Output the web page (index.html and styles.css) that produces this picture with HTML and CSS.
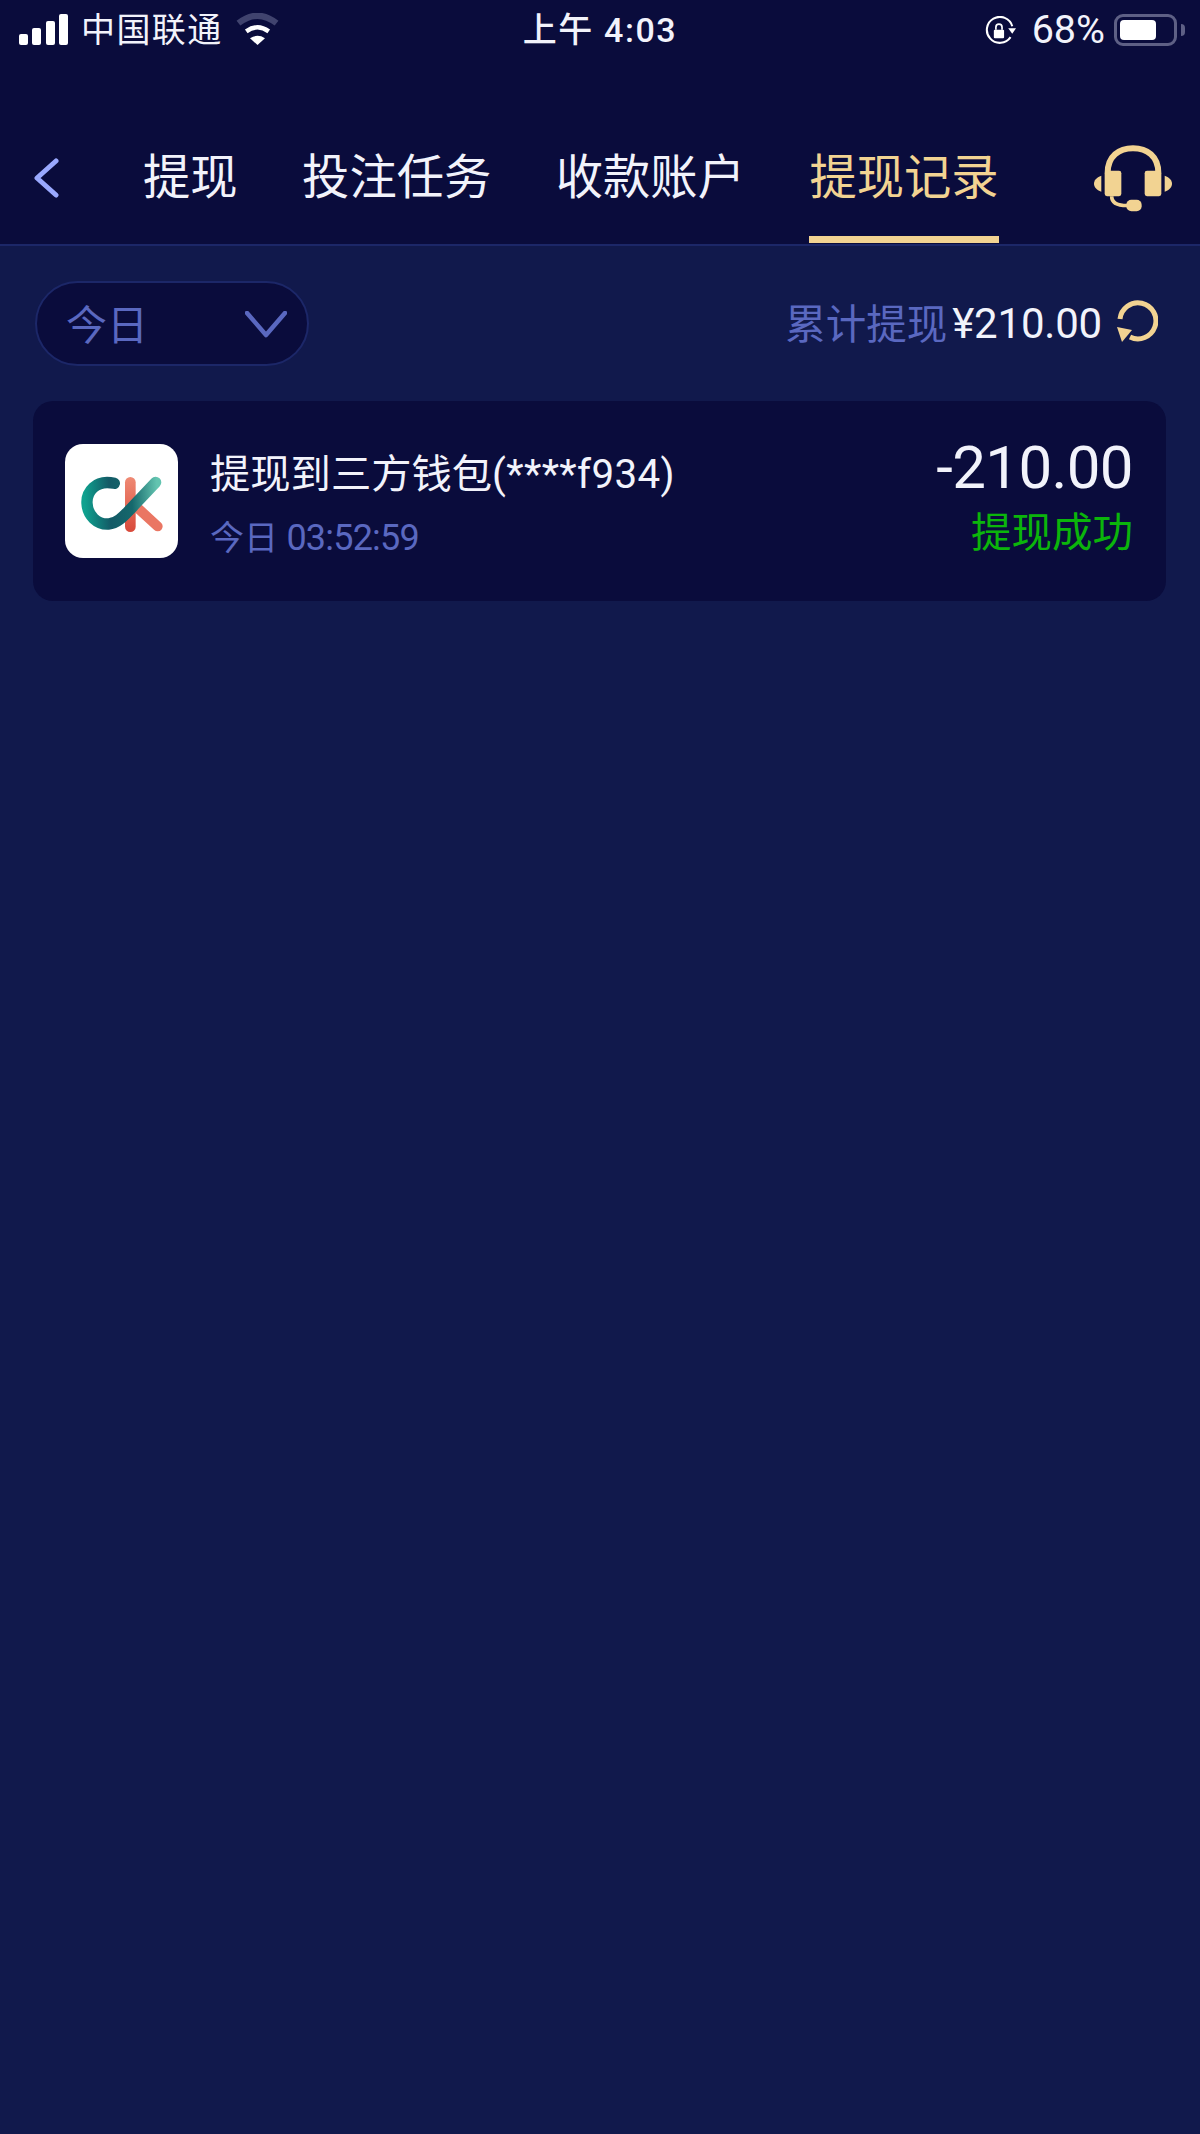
FILE: index.html
```html
<!DOCTYPE html>
<html lang="zh-CN">
<head>
<meta charset="utf-8">
<title>提现记录</title>
<link rel="stylesheet" href="styles.css">
</head>
<body>
<header class="top">
  <div class="status">
    <div class="status-left">
      <svg class="signal" viewBox="0 0 49 31"><rect x="0" y="20" width="9" height="11" rx="2"/><rect x="13" y="14" width="9" height="17" rx="2"/><rect x="27" y="7" width="9" height="24" rx="2"/><rect x="40" y="0" width="9" height="31" rx="2"/></svg>
      <span class="carrier">中国联通</span>
      <svg class="wifi" viewBox="705 38 130 94"><path class="wifi-far" d="M714 68Q770 24 826 68"/><path class="wifi-near" d="M737 92Q770 68 803 92"/><path class="wifi-dot" d="M748 112Q770 98 792 112L770 132Z"/></svg>
    </div>
    <div class="clock">上午 4:03</div>
    <div class="status-right">
      <svg class="lock" viewBox="75 48 95 85"><path class="lock-ring" d="M157 78A38 38 0 1 0 152 110"/><path class="lock-fill" d="M145 84L168 84L157 100Z"/><rect class="lock-fill" x="103" y="88" width="30" height="25" rx="3"/><path class="lock-shackle" d="M109 88V81A9 9 0 0 1 127 81V88"/></svg>
      <span class="percent">68%</span>
      <span class="battery"><span class="battery-level"></span></span>
      <span class="battery-nub"></span>
    </div>
  </div>
  <nav class="nav">
    <svg class="back" viewBox="0 0 25 40"><path d="M22 3L3 20L22 37"/></svg>
    <div class="tabs">
      <a class="tab">提现</a>
      <a class="tab">投注任务</a>
      <a class="tab">收款账户</a>
      <a class="tab tab-active">提现记录</a>
    </div>
    <svg class="headset" viewBox="43 45 234 200">
      <path class="hs-band" d="M84 128C84 78 118 54 160 54C202 54 236 78 236 128"/>
      <rect class="hs-fill" x="75" y="122" width="50" height="76" rx="7"/>
      <rect class="hs-fill" x="195" y="122" width="50" height="76" rx="7"/>
      <path class="hs-fill" d="M65 137V185C50 180 43 170 43 161C43 152 50 142 65 137Z"/>
      <path class="hs-fill" d="M255 137V185C270 180 277 170 277 161C277 152 270 142 255 137Z"/>
      <path class="hs-mic" d="M96 198C96 218 112 226 142 226"/>
      <rect class="hs-fill" x="140" y="209" width="46" height="34" rx="15"/>
    </svg>
  </nav>
</header>

<main class="content">
  <div class="toolbar">
    <div class="filter">
      <span class="filter-label">今日</span>
      <svg class="filter-arrow" viewBox="0 0 42 27"><path d="M2 2L21 24L40 2"/></svg>
    </div>
    <div class="summary">
      <span class="summary-label">累计提现</span>
      <span class="summary-value">¥210.00</span>
      <svg class="refresh" viewBox="0 0 42 42"><path class="refresh-arc" d="M4 19A18 18 0 1 1 14 37"/><path class="refresh-head" d="M1 27L16 30L6 42Z"/></svg>
    </div>
  </div>

  <article class="record">
    <div class="logo">
      <svg viewBox="44 40 339 342">
        <defs>
          <linearGradient id="ckTeal" x1="100" y1="180" x2="320" y2="170" gradientUnits="userSpaceOnUse">
            <stop offset="0" stop-color="#0fa28f"/>
            <stop offset="0.35" stop-color="#135a66"/>
            <stop offset="0.65" stop-color="#15686c"/>
            <stop offset="1" stop-color="#63c4b0"/>
          </linearGradient>
          <linearGradient id="ckRed" x1="240" y1="140" x2="240" y2="300" gradientUnits="userSpaceOnUse">
            <stop offset="0" stop-color="#ef8a74"/>
            <stop offset="1" stop-color="#d94b3c"/>
          </linearGradient>
        </defs>
        <path class="ck-stem" d="M240 155V288"/>
        <path class="ck-leg" d="M262 232L322 287"/>
        <path class="ck-c" d="M192 158C135 145 108 185 110 218C112 255 140 282 175 280C205 278 225 250 250 225L316 155"/>
      </svg>
    </div>
    <div class="record-info">
      <div class="record-title">提现到三方钱包<span class="title-code">(****f934)</span></div>
      <div class="record-time">今日 <span class="time-digits">03:52:59</span></div>
    </div>
    <div class="record-side">
      <div class="record-amount">-210.00</div>
      <div class="record-status">提现成功</div>
    </div>
  </article>
</main>
</body>
</html>
```
FILE: styles.css
```css
* { box-sizing: border-box; }

html, body {
  margin: 0;
  padding: 0;
}

body {
  width: 1200px;
  min-height: 2134px;
  background: #11194c;
  color: #f2f3fb;
  font-family: Roboto, "Noto Sans CJK SC", sans-serif;
  font-weight: 400;
}

.top {
  background: #0a0c3c;
  border-bottom: 2px solid #1c2768;
  height: 246px;
}

/* status bar */
.status {
  height: 60px;
  display: flex;
  align-items: center;
  justify-content: space-between;
  padding: 0 15px 0 19px;
}

.status-left,
.status-right {
  flex: 1 1 0;
  display: flex;
  align-items: center;
}

.status-right { justify-content: flex-end; }

.signal {
  width: 49px;
  height: 31px;
  fill: #fff;
  margin-top: -2px;
}

.carrier {
  font-size: 34px;
  line-height: 60px;
  margin-left: 13px;
  letter-spacing: 1.4px;
}

.wifi {
  width: 45px;
  height: 32px;
  margin-left: 12px;
  margin-top: -2px;
  fill: none;
}

.wifi-far { stroke: #40436e; stroke-width: 18; }
.wifi-near { stroke: #fff; stroke-width: 13; }
.wifi-dot { fill: #fff; }

.clock {
  font-size: 34px;
  font-weight: 500;
  line-height: 60px;
  letter-spacing: 1.6px;
  padding-right: 4px;
  white-space: nowrap;
}

.lock {
  width: 33px;
  height: 29px;
  margin-right: 15px;
}

.lock-ring { fill: none; stroke: #fff; stroke-width: 6; }
.lock-fill { fill: #fff; }
.lock-shackle { fill: none; stroke: #fff; stroke-width: 5; }

.percent {
  font-size: 39.5px;
  line-height: 60px;
  margin-right: 9px;
}

.battery {
  width: 63px;
  height: 32px;
  border: 3px solid #5e6085;
  border-radius: 9px;
  padding: 3px;
  display: flex;
}

.battery-level {
  width: 36px;
  background: #fff;
  border-radius: 4px;
}

.battery-nub {
  width: 4px;
  height: 12px;
  margin-left: 4px;
  background: #5e6085;
  border-radius: 0 4px 4px 0;
}

/* navigation */
.nav {
  height: 184px;
  display: flex;
  align-items: flex-start;
  padding-left: 34px;
}

.back {
  width: 25px;
  height: 40px;
  margin-top: 98px;
  fill: none;
  stroke: #9aa9ff;
  stroke-width: 5;
  stroke-linecap: round;
  stroke-linejoin: round;
}

.tabs {
  display: flex;
  gap: 64.5px;
  margin-left: 84px;
}

.tab {
  font-size: 47.3px;
  line-height: 60px;
  padding: 88px 0 28px;
  border-bottom: 7px solid transparent;
  white-space: nowrap;
}

.tab-active {
  color: #f2d392;
  border-bottom-color: #f2d392;
}

.headset {
  width: 78px;
  height: 67px;
  margin-left: 95px;
  margin-top: 85px;
}

.hs-band { fill: none; stroke: #f2d392; stroke-width: 18; }
.hs-fill { fill: #f2d392; }
.hs-mic { fill: none; stroke: #f2d392; stroke-width: 11; }

/* content */
.content {
  padding: 35px 34px 0 33px;
}

.toolbar {
  display: flex;
  align-items: center;
  justify-content: space-between;
  height: 85px;
  padding-left: 2px;
  padding-right: 8px;
}

.filter {
  width: 274px;
  height: 85px;
  display: flex;
  align-items: center;
  justify-content: space-between;
  padding: 0 20px 0 29px;
  background: #0a0c3c;
  border: 2px solid #1c2768;
  border-radius: 43px;
}

.filter-label {
  font-size: 41px;
  margin-top: -4px;
  color: #5a68c0;
}

.filter-arrow {
  width: 42px;
  height: 27px;
  margin-top: 2px;
  fill: none;
  stroke: #5a68c0;
  stroke-width: 4.5;
  stroke-linecap: round;
  stroke-linejoin: round;
}

.summary {
  display: flex;
  align-items: center;
}

.summary-label {
  font-size: 40.5px;
  margin-top: -4px;
  color: #5a68c0;
}

.summary-value {
  font-size: 42px;
  letter-spacing: -0.2px;
  margin-left: 5px;
}

.refresh {
  width: 42px;
  height: 42px;
  margin-left: 14px;
  margin-top: -6px;
}

.refresh-arc { fill: none; stroke: #f2d392; stroke-width: 5; }
.refresh-head { fill: #f2d392; }

.record {
  margin-top: 35px;
  height: 200px;
  display: flex;
  align-items: center;
  padding: 0 33px 0 32px;
  background: #0a0c3c;
  border-radius: 20px;
}

.logo {
  width: 113px;
  height: 114px;
  flex: none;
  background: #fff;
  border-radius: 18px;
  overflow: hidden;
}

.logo svg {
  display: block;
  width: 113px;
  height: 114px;
}

.ck-stem { fill: none; stroke: url(#ckRed); stroke-width: 32; stroke-linecap: round; }
.ck-leg { fill: none; stroke: #ea7663; stroke-width: 30; stroke-linecap: round; }
.ck-c { fill: none; stroke: url(#ckTeal); stroke-width: 34; stroke-linecap: round; }

.record-info {
  flex: 1;
  margin-left: 32px;
}

.record-title {
  font-size: 40.3px;
  line-height: 56px;
  margin-top: 5px;
  white-space: nowrap;
}

.title-code {
  letter-spacing: 0.35px;
}

.record-time {
  font-size: 34px;
  line-height: 44px;
  margin-top: 13px;
  color: #5a68c0;
}

.time-digits {
  font-size: 36px;
  letter-spacing: -0.8px;
}

.record-side {
  margin-top: -8px;
  text-align: right;
}

.record-amount {
  font-size: 60px;
  line-height: 70px;
  letter-spacing: -0.6px;
}

.record-status {
  font-size: 40.5px;
  line-height: 56px;
  margin-top: 2px;
  color: #0bb50b;
}
```
